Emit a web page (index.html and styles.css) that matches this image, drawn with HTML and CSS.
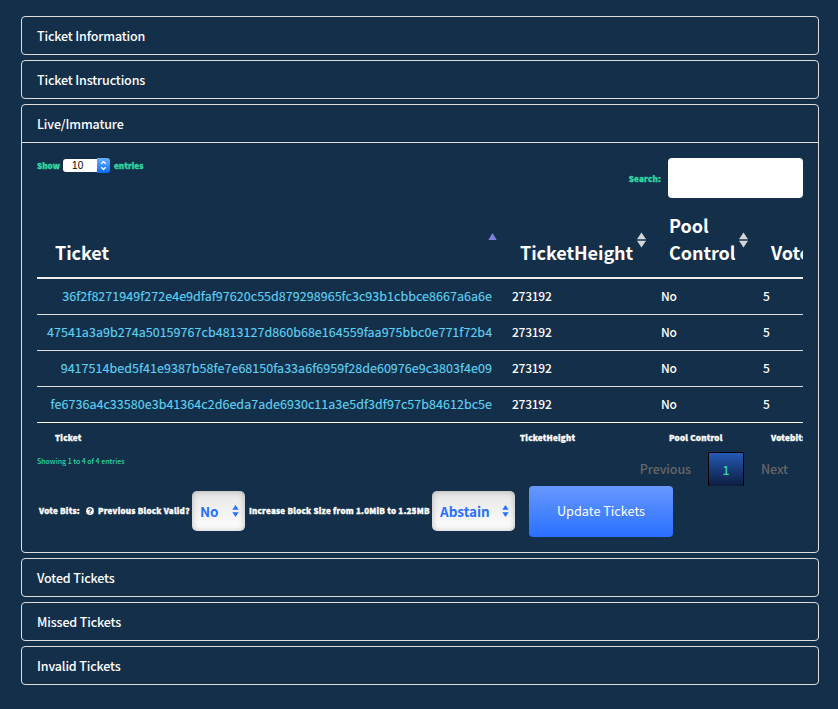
FILE: index.html
```html
<!DOCTYPE html>
<html lang="en">
<head>
<meta charset="utf-8">
<title>Tickets</title>
<link rel="stylesheet" href="styles.css">
</head>
<body>
<main class="panels">
  <section class="panel"><h2 class="panel-title">Ticket Information</h2></section>
  <section class="panel"><h2 class="panel-title">Ticket Instructions</h2></section>
  <section class="panel panel-open">
    <h2 class="panel-title">Live/Immature</h2>
    <div class="panel-body">
      <div class="controls">
        <div class="length"><span>Show</span>
          <span class="mini-select"><span class="mini-value">10</span><span class="mini-cap"><svg width="13" height="15" viewBox="0 0 13 15"><path d="M4.3 5.8 6.5 3.6 8.7 5.8M4.3 9.3 6.5 11.5 8.7 9.3" fill="none" stroke="#fff" stroke-width="1.3"/></svg></span></span>
          <span>entries</span></div>
        <label class="search"><span>Search:</span><input class="search-input" type="text"></label>
      </div>
      <div class="table-clip">
        <table class="tickets">
          <colgroup><col class="c-ticket"><col class="c-height"><col class="c-pool"><col class="c-vote"></colgroup>
          <thead><tr>
            <th>Ticket<svg class="sort sort-asc" width="9" height="16" viewBox="0 0 9 16"><path d="M4.5 1 8.7 8H.3z" fill="#8080dc"/></svg></th>
            <th>TicketHeight<svg class="sort" width="9" height="16" viewBox="0 0 9 16"><path d="M4.5.5 9 7.3H0zM0 8.7h9L4.5 15.5z" fill="#d3d6d9"/></svg></th>
            <th>Pool<br>Control<svg class="sort" width="9" height="16" viewBox="0 0 9 16"><path d="M4.5.5 9 7.3H0zM0 8.7h9L4.5 15.5z" fill="#d3d6d9"/></svg></th>
            <th>Votebits</th>
          </tr></thead>
          <tbody>
            <tr><td><a class="hash">36f2f8271949f272e4e9dfaf97620c55d879298965fc3c93b1cbbce8667a6a6e</a></td><td>273192</td><td>No</td><td>5</td></tr>
            <tr><td><a class="hash">47541a3a9b274a50159767cb4813127d860b68e164559faa975bbc0e771f72b4</a></td><td>273192</td><td>No</td><td>5</td></tr>
            <tr><td><a class="hash">9417514bed5f41e9387b58fe7e68150fa33a6f6959f28de60976e9c3803f4e09</a></td><td>273192</td><td>No</td><td>5</td></tr>
            <tr><td><a class="hash">fe6736a4c33580e3b41364c2d6eda7ade6930c11a3e5df3df97c57b84612bc5e</a></td><td>273192</td><td>No</td><td>5</td></tr>
          </tbody>
          <tfoot><tr><th>Ticket</th><th>TicketHeight</th><th>Pool Control</th><th>Votebits</th></tr></tfoot>
        </table>
      </div>
      <div class="table-foot">
        <div class="info">Showing 1 to 4 of 4 entries</div>
        <div class="pager"><span class="page-link">Previous</span><span class="page-current">1</span><span class="page-link page-next">Next</span></div>
      </div>
      <div class="vote-form">
        <span class="vote-label vote-bits">Vote Bits:</span>
        <svg class="help" width="8" height="8" viewBox="0 0 8 8"><circle cx="4" cy="4" r="3.9" fill="#fff"/><path d="M2.7 3.1C2.8 1.4 5.4 1.5 5.3 3 5.2 3.9 4 3.8 4 4.9M4 5.5v1.1" fill="none" stroke="#142f4a" stroke-width="1.1"/></svg>
        <span class="vote-label vote-valid">Previous Block Valid?</span>
        <span class="select select-no"><span>No</span><svg width="7" height="12" viewBox="0 0 7 12"><path d="M3.5 0 6.7 4.7H.3zM.3 7.3h6.4L3.5 12z" fill="#2970ff"/></svg></span>
        <span class="vote-label vote-size">Increase Block Size from 1.0MiB to 1.25MB</span>
        <span class="select select-abstain"><span>Abstain</span><svg width="7" height="12" viewBox="0 0 7 12"><path d="M3.5 0 6.7 4.7H.3zM.3 7.3h6.4L3.5 12z" fill="#2970ff"/></svg></span>
        <button class="update">Update Tickets</button>
      </div>
    </div>
  </section>
  <section class="panel"><h2 class="panel-title">Voted Tickets</h2></section>
  <section class="panel"><h2 class="panel-title">Missed Tickets</h2></section>
  <section class="panel"><h2 class="panel-title">Invalid Tickets</h2></section>
</main>
</body>
</html>
```
FILE: styles.css
```css
* { box-sizing: border-box; }
body {
  margin: 0;
  background: #142f4a;
  color: #fff;
  font: 500 13px/20px "Noto Sans CJK SC", "Open Sans", sans-serif;
}
svg { display: block; flex: none; }
.panels { display: flex; flex-direction: column; gap: 5px; padding: 16px 19px 0 21px; }
.panel { height: 39px; border: 1px solid #ddd; border-radius: 4px; }
.panel-open { height: 449px; }
.panel-title { margin: 0; padding: 9px 15px; height: 37px; font-size: 12.5px; line-height: 20px; font-weight: 500; letter-spacing: -.14px; }
.panel-open .panel-title { height: 38px; border-bottom: 1px solid #ddd; }
.panel-body { padding: 15px; }

.controls, .tickets tfoot th, .vote-label { font-size: 8px; font-weight: 900; letter-spacing: .25px; -webkit-text-stroke: .35px currentColor; }
.controls { display: flex; justify-content: space-between; height: 48px; color: #2ed8a3; line-height: 16px; letter-spacing: .1px; }
.length { display: flex; height: 16px; gap: 4px; }
.length > span:first-child { width: 22px; }
.mini-select { display: flex; width: 47px; height: 15px; }
.mini-value { width: 34px; height: 13px; margin-top: 1px; padding-left: 9px; border-radius: 3px 0 0 3px; background: #fff; color: #000; font: 10px/14px "Liberation Sans", sans-serif; -webkit-text-stroke: 0; }
.mini-cap { width: 13px; height: 15px; border-radius: 0 3px 3px 0; background: linear-gradient(#6cb0fb, #0a6cfb); }
.search { display: flex; align-items: flex-start; gap: 7px; letter-spacing: .25px; }
.search span { margin-top: 13px; }
.search-input { width: 135px; height: 40px; border: 0; border-radius: 4px; background: #fff; }

.table-clip { width: 766px; overflow: hidden; }
.tickets { width: 870px; table-layout: fixed; border-collapse: separate; border-spacing: 0; }
.c-ticket { width: 465px; }
.c-height { width: 149px; }
.c-pool { width: 102px; }
.c-vote { width: 154px; }
.tickets th { position: relative; padding: 0 18px; text-align: left; vertical-align: bottom; }
.tickets thead th { height: 73px; padding-bottom: 11px; border-bottom: 2px solid #eee; font-size: 18px; line-height: 27px; font-weight: 700; letter-spacing: -.06px; }
.sort { position: absolute; right: 5px; top: 26px; }
.tickets td { height: 36px; padding: 0 10px; border-bottom: 1px solid #ddd; line-height: 33px; font-size: 12px; vertical-align: top; letter-spacing: -.25px; }
.tickets td:first-child { text-align: right; }
.tickets tbody tr:last-child td { border-bottom-color: #fff; }
.hash { color: #5fd0f0; font-weight: 400; font-size: 12.5px; line-height: 33px; letter-spacing: .035px; -webkit-text-stroke: .15px currentColor; }
.tickets tfoot th { height: 29px; vertical-align: top; line-height: 30px; }

.table-foot { display: flex; justify-content: space-between; height: 34px; margin-top: -1px; }
.info { margin-top: 2px; color: #2ed8a3; font-size: 7px; line-height: 14px; }
.pager { display: flex; color: #666; font-size: 12.5px; line-height: 34px; letter-spacing: -.1px; }
.page-current { width: 36px; margin: 0 17px; height: 34px; border: 1px solid #000; border-bottom: 0; border-radius: 2px 2px 0 0; background: linear-gradient(#2459b5, #0d1d3e); color: #2ed8a3; text-align: center; }
.page-next { width: 42px; }

.vote-form { display: flex; align-items: center; height: 51px; padding-bottom: 2px; white-space: nowrap; }
.vote-bits { width: 47px; padding-left: 2px; }
.help { margin-right: 4px; margin-left: 2px; }
.vote-valid { width: 94px; }
.vote-size { width: 183px; }
.select { display: flex; align-items: center; justify-content: space-between; height: 40px; padding: 0 6px 0 8px; border-radius: 5px; background: linear-gradient(#e5e5e5, #fff); box-shadow: inset 0 0 6px rgba(0,0,0,.25); color: #2970ff; font-size: 13.5px; font-weight: 700; }
.select-no { width: 53px; margin-right: 4px; }
.select-abstain { width: 83px; }
.update { align-self: flex-start; width: 144px; height: 51px; margin-left: 14px; padding: 0 0 2px; border: 0; border-radius: 4px; background: linear-gradient(#6898ff, #2970ff); color: #fff; font: 400 12.7px/49px "Noto Sans CJK SC", sans-serif; }
```
